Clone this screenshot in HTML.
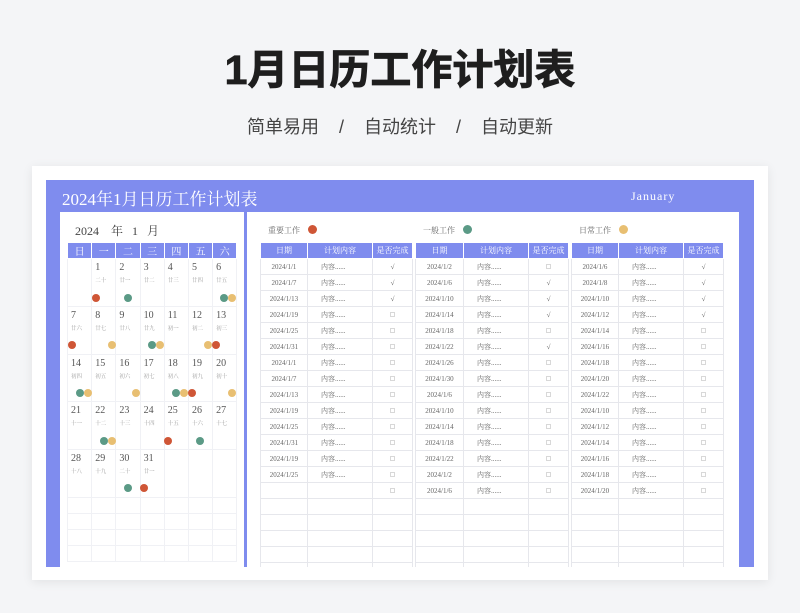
<!DOCTYPE html>
<html><head><meta charset="utf-8"><style>
*{margin:0;padding:0;box-sizing:border-box}
body{width:800px;height:613px;background:#f4f5f7;position:relative;overflow:hidden;font-family:"Liberation Serif","Noto Serif CJK SC",serif;color:#555}
.title{position:absolute;top:36px;left:0;width:800px;text-align:center;font:bold 41px "Liberation Sans","Noto Sans CJK SC",sans-serif;color:#1e1e1e;letter-spacing:0px;-webkit-text-stroke:0.8px #1e1e1e}
.sub{position:absolute;top:113px;left:0;width:800px;text-align:center;font:18px "Liberation Sans","Noto Sans CJK SC",sans-serif;color:#444}
.card{position:absolute;left:32px;top:166px;width:736px;height:414px;background:#fff;box-shadow:0 2px 10px rgba(0,0,0,.08)}
.frame{position:absolute;left:46px;top:180px;width:708px;height:387px;background:#7f8cee}
.htxt{position:absolute;left:62px;top:185px;color:#fff;font-size:17px}
.jan{position:absolute;left:631px;top:189px;color:#fff;font-size:12px;letter-spacing:1px}
.lp{position:absolute;left:60px;top:212px;width:184px;height:355px;background:#fff}
.rp{position:absolute;left:247px;top:212px;width:492px;height:355px;background:#fff}
.ym{position:absolute;left:75px;top:222px;font-size:12px;color:#444}
.cal{position:absolute;left:67px;top:242px;border-collapse:collapse;table-layout:fixed}
.cal td{width:24.2px;border:1px solid #f0f1f5;vertical-align:top;font-size:10px;padding:3px 0 0 3px;color:#555}
.cal th{height:16px;background:#7f8cee;color:#fff;font-weight:normal;font-size:10px;border:1px solid #fff;text-align:center}
.cal tr.w td{height:47.8px}
.cal tr.e td{height:16px}
.cal small{display:block;font-size:5.5px;color:#999;margin-top:3px}
.d{position:absolute;width:8px;height:8px;border-radius:50%}
.r{background:#cf5636}.g{background:#5b9a86}.y{background:#e8bf72}
.lg{position:absolute;top:225px;font-size:8px;color:#666}
.lg i{position:absolute;top:0;width:9px;height:9px;border-radius:50%}
.t{position:absolute;top:242px;border-collapse:collapse;table-layout:fixed}
.t th{height:16px;background:#7f8cee;color:#fff;font-weight:normal;font-size:8px;border:1px solid #fff;text-align:center}
.t td{height:16px;border:1px solid #e6e7ec;font-size:7px;text-align:center;color:#666;white-space:nowrap}
.t td.c{text-align:left;padding-left:13px}
.bx{display:inline-block;width:5px;height:5px;border:1px solid #d8d8d8;vertical-align:middle}
.ck{font-size:7px;color:#555}
</style></head><body>
<div class="title">1月日历工作计划表</div>
<div class="sub">简单易用 &nbsp;&nbsp;&nbsp;/&nbsp;&nbsp;&nbsp; 自动统计 &nbsp;&nbsp;&nbsp;/&nbsp;&nbsp;&nbsp; 自动更新</div>
<div class="card"></div>
<div class="frame"></div>
<div class="htxt">2024年1月日历工作计划表</div>
<div class="jan">January</div>
<div class="lp"></div>
<div class="rp"></div>
<div class="ym">2024 &nbsp;&nbsp; 年 &nbsp; 1 &nbsp; 月</div>
<table class="cal">
<tr><th>日</th><th>一</th><th>二</th><th>三</th><th>四</th><th>五</th><th>六</th></tr>
<tr class="w"><td></td><td>1<small>二十</small></td><td>2<small>廿一</small></td><td>3<small>廿二</small></td><td>4<small>廿三</small></td><td>5<small>廿四</small></td><td>6<small>廿五</small></td></tr>
<tr class="w"><td>7<small>廿六</small></td><td>8<small>廿七</small></td><td>9<small>廿八</small></td><td>10<small>廿九</small></td><td>11<small>初一</small></td><td>12<small>初二</small></td><td>13<small>初三</small></td></tr>
<tr class="w"><td>14<small>初四</small></td><td>15<small>初五</small></td><td>16<small>初六</small></td><td>17<small>初七</small></td><td>18<small>初八</small></td><td>19<small>初九</small></td><td>20<small>初十</small></td></tr>
<tr class="w"><td>21<small>十一</small></td><td>22<small>十二</small></td><td>23<small>十三</small></td><td>24<small>十四</small></td><td>25<small>十五</small></td><td>26<small>十六</small></td><td>27<small>十七</small></td></tr>
<tr class="w"><td>28<small>十八</small></td><td>29<small>十九</small></td><td>30<small>二十</small></td><td>31<small>廿一</small></td><td></td><td></td><td></td></tr>
<tr class="e"><td></td><td></td><td></td><td></td><td></td><td></td><td></td></tr>
<tr class="e"><td></td><td></td><td></td><td></td><td></td><td></td><td></td></tr>
<tr class="e"><td></td><td></td><td></td><td></td><td></td><td></td><td></td></tr>
<tr class="e"><td></td><td></td><td></td><td></td><td></td><td></td><td></td></tr>
</table>
<div class="d r" style="left:92px;top:294px"></div>
<div class="d g" style="left:124px;top:294px"></div>
<div class="d g" style="left:220px;top:294px"></div><div class="d y" style="left:228px;top:294px"></div>
<div class="d r" style="left:68px;top:341px"></div>
<div class="d y" style="left:108px;top:341px"></div>
<div class="d g" style="left:148px;top:341px"></div><div class="d y" style="left:156px;top:341px"></div>
<div class="d y" style="left:204px;top:341px"></div><div class="d r" style="left:212px;top:341px"></div>
<div class="d g" style="left:76px;top:389px"></div><div class="d y" style="left:84px;top:389px"></div>
<div class="d y" style="left:132px;top:389px"></div>
<div class="d g" style="left:172px;top:389px"></div><div class="d y" style="left:180px;top:389px"></div><div class="d r" style="left:188px;top:389px"></div>
<div class="d y" style="left:228px;top:389px"></div>
<div class="d g" style="left:100px;top:437px"></div><div class="d y" style="left:108px;top:437px"></div>
<div class="d r" style="left:164px;top:437px"></div>
<div class="d g" style="left:196px;top:437px"></div>
<div class="d g" style="left:124px;top:484px"></div>
<div class="d r" style="left:140px;top:484px"></div>

<div class="lg" style="left:268px">重要工作<i class="r" style="left:40px"></i></div>
<div class="lg" style="left:423px">一般工作<i class="g" style="left:40px"></i></div>
<div class="lg" style="left:579px">日常工作<i class="y" style="left:40px"></i></div>

<div style="position:absolute;left:0;top:0;width:800px;height:567px;overflow:hidden">
<table class="t" style="left:260px"><colgroup><col style="width:47px"><col style="width:65px"><col style="width:40px"></colgroup>
<tr><th>日期</th><th>计划内容</th><th>是否完成</th></tr>
<tr><td>2024/1/1</td><td class="c">内容......</td><td class="ck">√</td></tr>
<tr><td>2024/1/7</td><td class="c">内容......</td><td class="ck">√</td></tr>
<tr><td>2024/1/13</td><td class="c">内容......</td><td class="ck">√</td></tr>
<tr><td>2024/1/19</td><td class="c">内容......</td><td><span class="bx"></span></td></tr>
<tr><td>2024/1/25</td><td class="c">内容......</td><td><span class="bx"></span></td></tr>
<tr><td>2024/1/31</td><td class="c">内容......</td><td><span class="bx"></span></td></tr>
<tr><td>2024/1/1</td><td class="c">内容......</td><td><span class="bx"></span></td></tr>
<tr><td>2024/1/7</td><td class="c">内容......</td><td><span class="bx"></span></td></tr>
<tr><td>2024/1/13</td><td class="c">内容......</td><td><span class="bx"></span></td></tr>
<tr><td>2024/1/19</td><td class="c">内容......</td><td><span class="bx"></span></td></tr>
<tr><td>2024/1/25</td><td class="c">内容......</td><td><span class="bx"></span></td></tr>
<tr><td>2024/1/31</td><td class="c">内容......</td><td><span class="bx"></span></td></tr>
<tr><td>2024/1/19</td><td class="c">内容......</td><td><span class="bx"></span></td></tr>
<tr><td>2024/1/25</td><td class="c">内容......</td><td><span class="bx"></span></td></tr>
<tr><td></td><td></td><td><span class="bx"></span></td></tr>
<tr><td></td><td></td><td></td></tr><tr><td></td><td></td><td></td></tr><tr><td></td><td></td><td></td></tr><tr><td></td><td></td><td></td></tr><tr><td></td><td></td><td></td></tr>
</table>
<table class="t" style="left:415px"><colgroup><col style="width:48px"><col style="width:65px"><col style="width:40px"></colgroup>
<tr><th>日期</th><th>计划内容</th><th>是否完成</th></tr>
<tr><td>2024/1/2</td><td class="c">内容......</td><td><span class="bx"></span></td></tr>
<tr><td>2024/1/6</td><td class="c">内容......</td><td class="ck">√</td></tr>
<tr><td>2024/1/10</td><td class="c">内容......</td><td class="ck">√</td></tr>
<tr><td>2024/1/14</td><td class="c">内容......</td><td class="ck">√</td></tr>
<tr><td>2024/1/18</td><td class="c">内容......</td><td><span class="bx"></span></td></tr>
<tr><td>2024/1/22</td><td class="c">内容......</td><td class="ck">√</td></tr>
<tr><td>2024/1/26</td><td class="c">内容......</td><td><span class="bx"></span></td></tr>
<tr><td>2024/1/30</td><td class="c">内容......</td><td><span class="bx"></span></td></tr>
<tr><td>2024/1/6</td><td class="c">内容......</td><td><span class="bx"></span></td></tr>
<tr><td>2024/1/10</td><td class="c">内容......</td><td><span class="bx"></span></td></tr>
<tr><td>2024/1/14</td><td class="c">内容......</td><td><span class="bx"></span></td></tr>
<tr><td>2024/1/18</td><td class="c">内容......</td><td><span class="bx"></span></td></tr>
<tr><td>2024/1/22</td><td class="c">内容......</td><td><span class="bx"></span></td></tr>
<tr><td>2024/1/2</td><td class="c">内容......</td><td><span class="bx"></span></td></tr>
<tr><td>2024/1/6</td><td class="c">内容......</td><td><span class="bx"></span></td></tr>
<tr><td></td><td></td><td></td></tr><tr><td></td><td></td><td></td></tr><tr><td></td><td></td><td></td></tr><tr><td></td><td></td><td></td></tr><tr><td></td><td></td><td></td></tr>
</table>
<table class="t" style="left:571px"><colgroup><col style="width:47px"><col style="width:65px"><col style="width:40px"></colgroup>
<tr><th>日期</th><th>计划内容</th><th>是否完成</th></tr>
<tr><td>2024/1/6</td><td class="c">内容......</td><td class="ck">√</td></tr>
<tr><td>2024/1/8</td><td class="c">内容......</td><td class="ck">√</td></tr>
<tr><td>2024/1/10</td><td class="c">内容......</td><td class="ck">√</td></tr>
<tr><td>2024/1/12</td><td class="c">内容......</td><td class="ck">√</td></tr>
<tr><td>2024/1/14</td><td class="c">内容......</td><td><span class="bx"></span></td></tr>
<tr><td>2024/1/16</td><td class="c">内容......</td><td><span class="bx"></span></td></tr>
<tr><td>2024/1/18</td><td class="c">内容......</td><td><span class="bx"></span></td></tr>
<tr><td>2024/1/20</td><td class="c">内容......</td><td><span class="bx"></span></td></tr>
<tr><td>2024/1/22</td><td class="c">内容......</td><td><span class="bx"></span></td></tr>
<tr><td>2024/1/10</td><td class="c">内容......</td><td><span class="bx"></span></td></tr>
<tr><td>2024/1/12</td><td class="c">内容......</td><td><span class="bx"></span></td></tr>
<tr><td>2024/1/14</td><td class="c">内容......</td><td><span class="bx"></span></td></tr>
<tr><td>2024/1/16</td><td class="c">内容......</td><td><span class="bx"></span></td></tr>
<tr><td>2024/1/18</td><td class="c">内容......</td><td><span class="bx"></span></td></tr>
<tr><td>2024/1/20</td><td class="c">内容......</td><td><span class="bx"></span></td></tr>
<tr><td></td><td></td><td></td></tr><tr><td></td><td></td><td></td></tr><tr><td></td><td></td><td></td></tr><tr><td></td><td></td><td></td></tr><tr><td></td><td></td><td></td></tr>
</table>
</div>
</body></html>
